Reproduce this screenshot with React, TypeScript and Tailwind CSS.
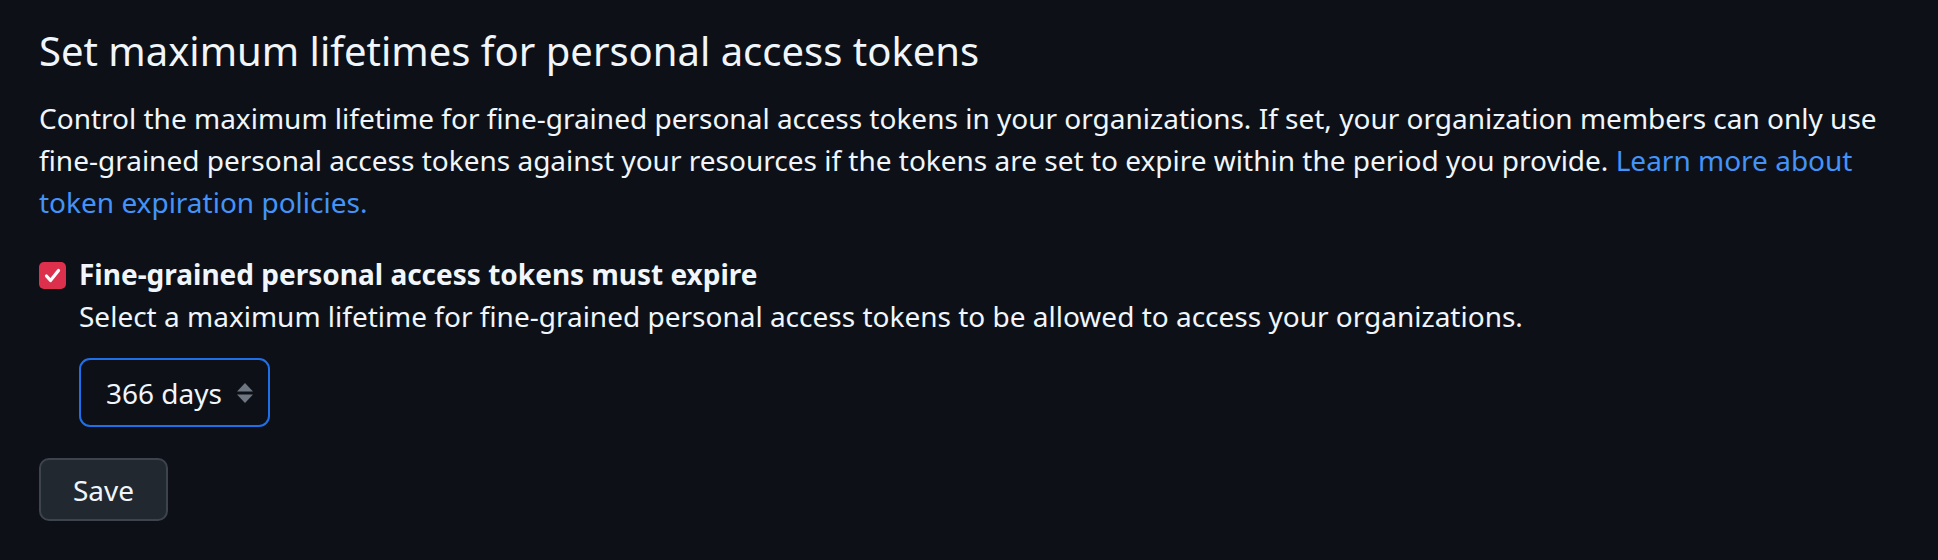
import { useState } from "react";

const font = { fontFamily: '"Noto Sans", "Open Sans", sans-serif' };

function Checkbox({ checked, onToggle }: { checked: boolean; onToggle: () => void }) {
  return (
    <button
      type="button"
      onClick={onToggle}
      className={
        checked
          ? "mt-[9px] flex h-[27px] w-[27px] shrink-0 items-center justify-center rounded-[5px] bg-[#dc304d]"
          : "mt-[9px] flex h-[27px] w-[27px] shrink-0 items-center justify-center rounded-[5px] border-2 border-[#3d444d] bg-[#0d1117]"
      }
    >
      {checked && (
        <svg width="19" height="19" viewBox="0 0 19 19" fill="none">
          <path
            d="M3.5 10 L7.5 14.5 L15.5 4.5"
            stroke="#ffffff"
            strokeWidth="3.2"
            strokeLinecap="round"
            strokeLinejoin="round"
          />
        </svg>
      )}
    </button>
  );
}

export default function App() {
  const [mustExpire, setMustExpire] = useState(true);

  return (
    <div className="min-h-[560px] w-full bg-[#0d1117] text-[#f0f6fc]" style={font}>
      <div className="px-[39px] pt-[26px]">
        <h2 className="text-[40px] font-normal leading-[50px]">
          Set maximum lifetimes for personal access tokens
        </h2>

        <p className="mt-[21px] text-[28px] leading-[42px]">
          Control the maximum lifetime for fine-grained personal access tokens in your
          organizations. If set, your organization members can only use fine-grained personal
          access tokens against your resources if the tokens are set to expire within the period
          you provide.{" "}
          <a href="#" className="text-[#4493f8]">
            Learn more about token expiration policies.
          </a>
        </p>

        <div className="mt-[30px] flex gap-[13px]">
          <Checkbox checked={mustExpire} onToggle={() => setMustExpire(!mustExpire)} />
          <div className="flex flex-col">
            <label className="text-[28px] font-bold leading-[42px]">
              Fine-grained personal access tokens must expire
            </label>
            <span className="text-[28px] leading-[42px]">
              Select a maximum lifetime for fine-grained personal access tokens to be allowed to
              access your organizations.
            </span>
            <div className="mt-[21px] flex h-[69px] w-[191px] items-center rounded-[11px] border-2 border-[#1f6feb] bg-[#0d1117] pl-[25px] pr-[15px]">
              <span className="flex-1 text-[28px] leading-[42px]">366 days</span>
              <svg width="16" height="20" viewBox="0 0 16 20">
                <polygon points="8,0 16,8.5 0,8.5" fill="#6e7681" />
                <polygon points="0,11.5 16,11.5 8,20" fill="#6e7681" />
              </svg>
            </div>
          </div>
        </div>

        <button
          type="button"
          className="mt-[31px] flex h-[63px] w-[129px] items-center justify-center rounded-[10px] border-2 border-[#3d444d] bg-[#212830] text-[28px] leading-[42px] text-[#f0f6fc]"
        >
          Save
        </button>
      </div>
    </div>
  );
}
